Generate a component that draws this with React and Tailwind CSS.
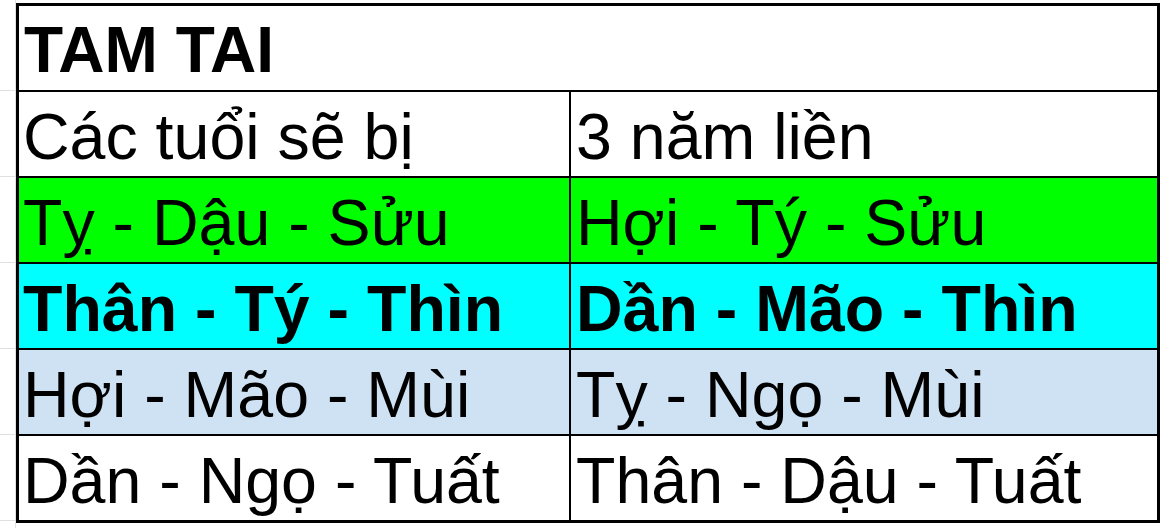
import React from 'react';

const rows = [
  { a: 'Các tuổi sẽ bị', b: '3 năm liền', bg: 'bg-white', bold: false },
  { a: 'Tỵ - Dậu - Sửu', b: 'Hợi - Tý - Sửu', bg: 'bg-[#00ff00]', bold: false },
  { a: 'Thân - Tý - Thìn', b: 'Dần - Mão - Thìn', bg: 'bg-[#00ffff]', bold: true },
  { a: 'Hợi - Mão - Mùi', b: 'Tỵ - Ngọ - Mùi', bg: 'bg-[#cfe2f3]', bold: false },
  { a: 'Dần - Ngọ - Tuất', b: 'Thân - Dậu - Tuất', bg: 'bg-white', bold: false },
];

const App = () => {
  return (
    <div className="w-[1162px] h-[528px] bg-white flex overflow-hidden font-['Liberation_Sans',Arial,sans-serif] text-black">
      {/* spreadsheet gridlines on the left */}
      <div className="w-[16px] pt-[3px] flex flex-col border-r border-[#e0e0e0]">
        <div className="h-[88px] border-b border-[#e0e0e0]" />
        <div className="h-[86px] border-b border-[#e0e0e0]" />
        <div className="h-[86px] border-b border-[#e0e0e0]" />
        <div className="h-[86px] border-b border-[#e0e0e0]" />
        <div className="h-[86px] border-b border-[#e0e0e0]" />
        <div className="h-[86px] border-b border-[#e0e0e0]" />
      </div>

      <div className="pt-[3px]">
        <div className="w-[1144px] border-[3px] border-black bg-black grid grid-cols-[550px_586px] gap-[2px]">
          <div className="col-span-2 h-[84px] bg-white flex items-end pl-[5px] pb-[3px]">
            <span className="text-[64px] font-bold leading-[normal]">TAM TAI</span>
          </div>
          {rows.map((r, i) => (
            <React.Fragment key={i}>
              <div className={`h-[84px] ${r.bg} flex items-end pl-[4px] pb-[2px]`}>
                <span className={`text-[64.5px] leading-[normal] whitespace-nowrap ${r.bold ? 'font-bold' : ''}`}>{r.a}</span>
              </div>
              <div className={`h-[84px] ${r.bg} flex items-end pl-[5px] pb-[2px]`}>
                <span className={`text-[64.5px] leading-[normal] whitespace-nowrap ${r.bold ? 'font-bold' : ''}`}>{r.b}</span>
              </div>
            </React.Fragment>
          ))}
        </div>
      </div>
    </div>
  );
};

export default App;
